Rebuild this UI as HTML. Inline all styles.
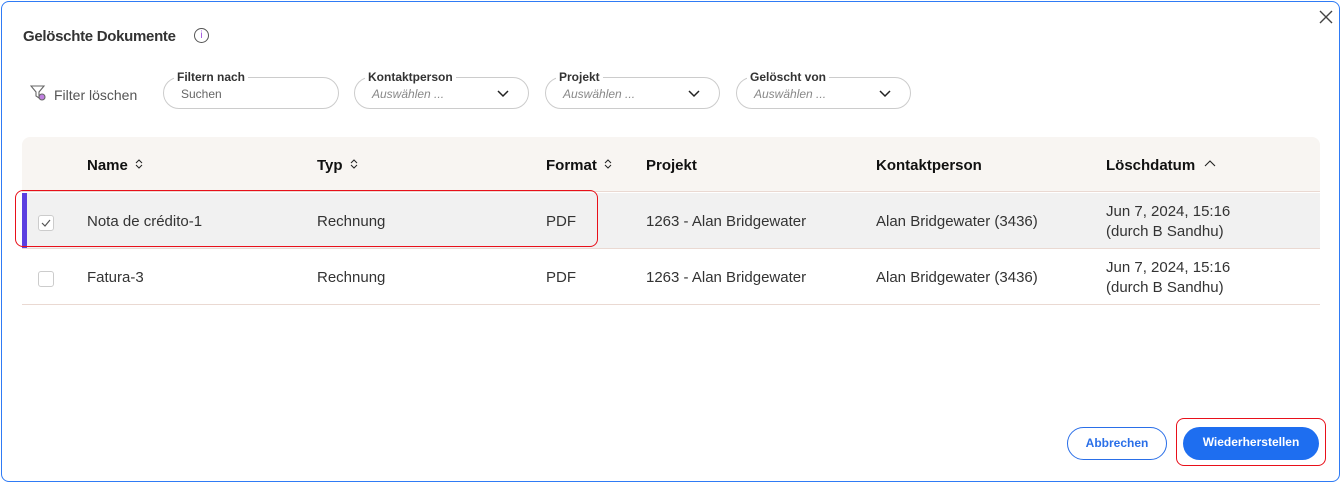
<!DOCTYPE html>
<html><head><meta charset="utf-8"><style>
*{box-sizing:border-box;margin:0;padding:0}
body{width:1341px;height:483px;background:#fff;font-family:"Liberation Sans",sans-serif;color:#222;position:relative;overflow:hidden}
.frame{position:absolute;left:1px;top:1px;width:1339px;height:481px;border:1.5px solid #2f7bf5;border-radius:8px}
.abs{position:absolute}
.title{left:23px;top:28px;font-size:15px;font-weight:bold;color:#333;letter-spacing:-.3px}
.info{left:194px;top:28px;width:15px;height:15px;border:1px solid #555;border-radius:50%;font-size:10px;color:#a050e0;text-align:center;line-height:13px}
.fl{left:54px;top:87px;font-size:14px;color:#555}
.box{position:absolute;top:77px;height:32px;border:1px solid #ccc;border-radius:16px}
.lbl{position:absolute;top:-8px;left:10px;background:#fff;padding:0 3px;font-size:12px;font-weight:bold;color:#333}
.ph{position:absolute;left:17px;top:9px;font-size:12px;color:#888;font-style:italic}
.chev{position:absolute;right:18px;top:8px}
.table{left:22px;top:137px;width:1298px;height:168px}
.hdr{position:absolute;left:0;top:0;width:100%;height:55px;background:#f8f5f2;border-radius:8px 8px 0 0;border-bottom:1px solid #ead9d2}
.row{position:absolute;left:0;width:100%;height:56px;border-bottom:1px solid #ead9d2}
.c{position:absolute;font-size:15px;color:#333}
.h{font-weight:bold;color:#111;top:20px}
.h svg{margin-left:6px;vertical-align:0}
.cb{position:absolute;left:16px;top:22px;width:16px;height:16px;border:1px solid #ccc;border-radius:3px;background:#fff}
.btn{position:absolute;top:427px;height:33px;border-radius:17px;font-size:12px;font-weight:bold;text-align:center;line-height:31px}
</style></head><body>
<div class="frame"></div>
<div class="abs title">Gelöschte Dokumente</div>
<div class="abs info">i</div>
<svg class="abs" style="left:1319px;top:10px" width="14" height="14" viewBox="0 0 14 14"><path d="M1 1l12 12M13 1L1 13" stroke="#444" stroke-width="1.4"/></svg>
<svg class="abs" style="left:30px;top:85px" width="18" height="18" viewBox="0 0 18 18" fill="none" stroke="#666" stroke-width="1.1"><path d="M1 1h13l-5 6v6l-3-2V7z"/><circle cx="12" cy="12" r="3" fill="#c080e0" stroke="#666"/></svg>
<div class="abs fl">Filter löschen</div>
<div class="box" style="left:163px;width:176px"><span class="lbl">Filtern nach</span><span class="ph" style="font-style:normal;color:#666">Suchen</span></div>
<div class="box" style="left:354px;width:175px"><span class="lbl">Kontaktperson</span><span class="ph">Auswählen ...</span><svg class="chev" width="14" height="14" viewBox="0 0 14 14"><path d="M2 5l5 5 5-5" stroke="#222" stroke-width="1.5" fill="none"/></svg></div>
<div class="box" style="left:545px;width:175px"><span class="lbl">Projekt</span><span class="ph">Auswählen ...</span><svg class="chev" width="14" height="14" viewBox="0 0 14 14"><path d="M2 5l5 5 5-5" stroke="#222" stroke-width="1.5" fill="none"/></svg></div>
<div class="box" style="left:736px;width:175px"><span class="lbl">Gelöscht von</span><span class="ph">Auswählen ...</span><svg class="chev" width="14" height="14" viewBox="0 0 14 14"><path d="M2 5l5 5 5-5" stroke="#222" stroke-width="1.5" fill="none"/></svg></div>

<div class="abs table">
<div class="hdr">
<span class="c h" style="left:65px">Name<svg width="10" height="12" viewBox="0 0 10 12"><path d="M2 5l3-3 3 3M2 7l3 3 3-3" stroke="#222" stroke-width="1" fill="none"/></svg></span>
<span class="c h" style="left:295px">Typ<svg width="10" height="12" viewBox="0 0 10 12"><path d="M2 5l3-3 3 3M2 7l3 3 3-3" stroke="#222" stroke-width="1" fill="none"/></svg></span>
<span class="c h" style="left:524px">Format<svg width="10" height="12" viewBox="0 0 10 12"><path d="M2 5l3-3 3 3M2 7l3 3 3-3" stroke="#222" stroke-width="1" fill="none"/></svg></span>
<span class="c h" style="left:624px">Projekt</span>
<span class="c h" style="left:854px">Kontaktperson</span>
<span class="c h" style="left:1084px">Löschdatum<svg width="14" height="12" viewBox="0 0 14 12" style="margin-left:8px"><path d="M2 8l5-5 5 5" stroke="#222" stroke-width="1.1" fill="none"/></svg></span>
</div>
<div class="row" style="top:56px;background:#f1f1f1">
<div style="position:absolute;left:0;top:0;width:5px;height:55px;background:#5b3fe0"></div>
<div class="cb"><svg width="14" height="14" viewBox="0 0 14 14"><path d="M3 7l3 3 5-6" stroke="#555" stroke-width="1.2" fill="none"/></svg></div>
<span class="c" style="left:65px;top:20px">Nota de crédito-1</span>
<span class="c" style="left:295px;top:20px">Rechnung</span>
<span class="c" style="left:524px;top:20px">PDF</span>
<span class="c" style="left:624px;top:20px">1263 - Alan Bridgewater</span>
<span class="c" style="left:854px;top:20px">Alan Bridgewater (3436)</span>
<span class="c" style="left:1084px;top:9px;line-height:20px">Jun 7, 2024, 15:16<br>(durch B Sandhu)</span>
</div>
<div class="row" style="top:112px">
<div class="cb"></div>
<span class="c" style="left:65px;top:20px">Fatura-3</span>
<span class="c" style="left:295px;top:20px">Rechnung</span>
<span class="c" style="left:524px;top:20px">PDF</span>
<span class="c" style="left:624px;top:20px">1263 - Alan Bridgewater</span>
<span class="c" style="left:854px;top:20px">Alan Bridgewater (3436)</span>
<span class="c" style="left:1084px;top:9px;line-height:20px">Jun 7, 2024, 15:16<br>(durch B Sandhu)</span>
</div>
</div>
<div class="abs" style="left:15px;top:190px;width:583px;height:57px;border:1.5px solid #e8101a;border-radius:8px"></div>
<div class="btn" style="left:1067px;width:100px;border:1px solid #2a6fe8;color:#2a6fe8;background:#fff">Abbrechen</div>
<div class="btn" style="left:1183px;width:136px;background:#1e6ef0;color:#fff">Wiederherstellen</div>
<div class="abs" style="left:1176px;top:418px;width:150px;height:48px;border:1.5px solid #e8101a;border-radius:8px"></div>
</body></html>
